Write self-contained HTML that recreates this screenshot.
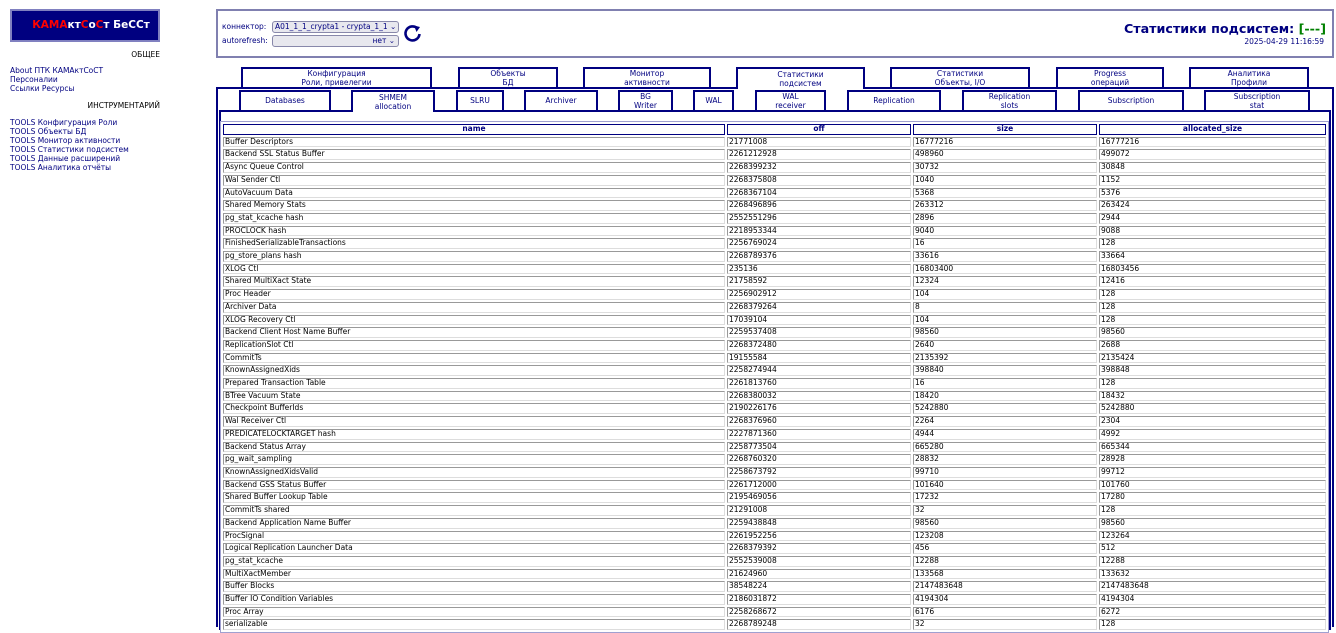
<!DOCTYPE html>
<html><head><meta charset="utf-8"><style>
*{box-sizing:border-box;margin:0;padding:0}
body{width:1336px;height:624px;overflow:hidden;background:#fff;font-family:"DejaVu Sans","Liberation Sans",sans-serif;font-size:7.5px;color:#000080;position:relative}
.a{position:absolute}
.logo{left:10px;top:9px;width:150px;height:33px;border:2px solid #8080c0;background:#000080;outline:1px solid #000080;outline-offset:-4px;color:#fff;font-weight:bold;font-size:10.5px;line-height:29px;text-align:center;padding-left:12px;white-space:nowrap}
.r{color:#ff0000}
.side{left:10px;line-height:9px;font-size:7.5px;white-space:nowrap}
.hdr{left:216px;top:9px;width:1118px;height:49px;border:2px solid #8080b0}
.sel{position:absolute;height:12px;border:1px solid #8888aa;border-radius:3px;background:#e8e8ee;font-size:7.5px;line-height:10px;padding-left:2px;color:#000080;white-space:nowrap;overflow:hidden}
.tab{position:absolute;border:2px solid #000080;border-bottom:none;background:#fff;text-align:center;font-size:7.5px;line-height:9.5px;display:flex;align-items:center;justify-content:center;color:#000080}
.frame{left:216px;top:87px;width:1118px;height:540px;border:2px solid #000080;border-bottom:none}
.panel{left:219px;top:110px;width:1112px;height:520px;border:2px solid #000080;border-bottom:none}
table{position:absolute;left:220px;top:121px;border:1px solid #a0a0d0;border-collapse:separate;border-spacing:2px;width:1109px;table-layout:fixed}
td,th{border:1px solid;border-color:#999 #ddd #ddd #999;height:10.7px;font-size:7.5px;line-height:8.7px;padding:0 1px;color:#000;font-weight:normal;text-align:left;white-space:nowrap;overflow:hidden}
th{color:#000080;font-weight:bold;text-align:center;border-color:#000080}
</style></head><body>
<div class="a logo"><span class="r">КАМА</span>кт<span class="r">С</span>о<span class="r">С</span>т БеССт</div>
<div class="a side" style="top:50px;width:150px;text-align:right;color:#000">ОБЩЕЕ</div>
<div class="a side" style="top:66px">About ПТК КАМАктСоСТ<br>Персоналии<br>Ссылки Ресурсы</div>
<div class="a side" style="top:101px;width:150px;text-align:right;color:#000">ИНСТРУМЕНТАРИЙ</div>
<div class="a side" style="top:118px">TOOLS Конфигурация Роли<br>TOOLS Объекты БД<br>TOOLS Монитор активности<br>TOOLS Статистики подсистем<br>TOOLS Данные расширений<br>TOOLS Аналитика отчёты</div>
<div class="a hdr"></div>
<div class="a" style="left:222px;top:22px;font-size:7.5px">коннектор:</div>
<div class="a" style="left:222px;top:36px;font-size:7.5px">autorefresh:</div>
<div class="sel" style="left:272px;top:21px;width:127px">A01_1_1_crypta1 - crypta_1_1 ⌄</div>
<div class="sel" style="left:272px;top:35px;width:127px;text-align:right;padding-right:3px">нет ⌄</div>
<svg class="a" style="left:403px;top:24px" width="20" height="20" viewBox="0 0 20 20"><path d="M14.5 4.5 A7 7 0 1 0 16.5 10" fill="none" stroke="#000080" stroke-width="2.6"/><path d="M11 1.5 L17 3 L13.5 8 Z" fill="#000080"/></svg>
<div class="a" style="right:10px;top:21px;font-size:12.7px;font-weight:bold;color:#000080">Статистики подсистем: <span style="color:#008000">[---]</span></div>
<div class="a" style="right:12px;top:37px;font-size:7.5px">2025-04-29 11:16:59</div>
<div class="a frame"></div>
<div class="tab" style="left:241px;top:67px;width:191px;height:20px">Конфигурация<br>Роли, привелегии</div>
<div class="tab" style="left:458px;top:67px;width:100px;height:20px">Объекты<br>БД</div>
<div class="tab" style="left:583px;top:67px;width:128px;height:20px">Монитор<br>активности</div>
<div class="tab" style="left:736px;top:67px;width:129px;height:22px;z-index:2">Статистики<br>подсистем</div>
<div class="tab" style="left:890px;top:67px;width:140px;height:20px">Статистики<br>Объекты, I/O</div>
<div class="tab" style="left:1056px;top:67px;width:108px;height:20px">Progress<br>операций</div>
<div class="tab" style="left:1189px;top:67px;width:120px;height:20px">Аналитика<br>Профили</div>
<div class="a panel"></div>
<div class="tab" style="left:239px;top:90px;width:92px;height:20px">Databases</div>
<div class="tab" style="left:351px;top:90px;width:84px;height:22px;z-index:2">SHMEM<br>allocation</div>
<div class="tab" style="left:456px;top:90px;width:48px;height:20px">SLRU</div>
<div class="tab" style="left:524px;top:90px;width:74px;height:20px">Archiver</div>
<div class="tab" style="left:618px;top:90px;width:55px;height:20px">BG<br>Writer</div>
<div class="tab" style="left:693px;top:90px;width:41px;height:20px">WAL</div>
<div class="tab" style="left:755px;top:90px;width:71px;height:20px">WAL<br>receiver</div>
<div class="tab" style="left:847px;top:90px;width:94px;height:20px">Replication</div>
<div class="tab" style="left:962px;top:90px;width:95px;height:20px">Replication<br>slots</div>
<div class="tab" style="left:1078px;top:90px;width:106px;height:20px">Subscription</div>
<div class="tab" style="left:1204px;top:90px;width:106px;height:20px">Subscription<br>stat</div>
<table>
<colgroup><col style="width:502px"><col style="width:184px"><col style="width:184px"><col></colgroup>
<tr><th>name</th><th>off</th><th>size</th><th>allocated_size</th></tr>
<tr><td>Buffer Descriptors</td><td>21771008</td><td>16777216</td><td>16777216</td></tr>
<tr><td>Backend SSL Status Buffer</td><td>2261212928</td><td>498960</td><td>499072</td></tr>
<tr><td>Async Queue Control</td><td>2268399232</td><td>30732</td><td>30848</td></tr>
<tr><td>Wal Sender Ctl</td><td>2268375808</td><td>1040</td><td>1152</td></tr>
<tr><td>AutoVacuum Data</td><td>2268367104</td><td>5368</td><td>5376</td></tr>
<tr><td>Shared Memory Stats</td><td>2268496896</td><td>263312</td><td>263424</td></tr>
<tr><td>pg_stat_kcache hash</td><td>2552551296</td><td>2896</td><td>2944</td></tr>
<tr><td>PROCLOCK hash</td><td>2218953344</td><td>9040</td><td>9088</td></tr>
<tr><td>FinishedSerializableTransactions</td><td>2256769024</td><td>16</td><td>128</td></tr>
<tr><td>pg_store_plans hash</td><td>2268789376</td><td>33616</td><td>33664</td></tr>
<tr><td>XLOG Ctl</td><td>235136</td><td>16803400</td><td>16803456</td></tr>
<tr><td>Shared MultiXact State</td><td>21758592</td><td>12324</td><td>12416</td></tr>
<tr><td>Proc Header</td><td>2256902912</td><td>104</td><td>128</td></tr>
<tr><td>Archiver Data</td><td>2268379264</td><td>8</td><td>128</td></tr>
<tr><td>XLOG Recovery Ctl</td><td>17039104</td><td>104</td><td>128</td></tr>
<tr><td>Backend Client Host Name Buffer</td><td>2259537408</td><td>98560</td><td>98560</td></tr>
<tr><td>ReplicationSlot Ctl</td><td>2268372480</td><td>2640</td><td>2688</td></tr>
<tr><td>CommitTs</td><td>19155584</td><td>2135392</td><td>2135424</td></tr>
<tr><td>KnownAssignedXids</td><td>2258274944</td><td>398840</td><td>398848</td></tr>
<tr><td>Prepared Transaction Table</td><td>2261813760</td><td>16</td><td>128</td></tr>
<tr><td>BTree Vacuum State</td><td>2268380032</td><td>18420</td><td>18432</td></tr>
<tr><td>Checkpoint BufferIds</td><td>2190226176</td><td>5242880</td><td>5242880</td></tr>
<tr><td>Wal Receiver Ctl</td><td>2268376960</td><td>2264</td><td>2304</td></tr>
<tr><td>PREDICATELOCKTARGET hash</td><td>2227871360</td><td>4944</td><td>4992</td></tr>
<tr><td>Backend Status Array</td><td>2258773504</td><td>665280</td><td>665344</td></tr>
<tr><td>pg_wait_sampling</td><td>2268760320</td><td>28832</td><td>28928</td></tr>
<tr><td>KnownAssignedXidsValid</td><td>2258673792</td><td>99710</td><td>99712</td></tr>
<tr><td>Backend GSS Status Buffer</td><td>2261712000</td><td>101640</td><td>101760</td></tr>
<tr><td>Shared Buffer Lookup Table</td><td>2195469056</td><td>17232</td><td>17280</td></tr>
<tr><td>CommitTs shared</td><td>21291008</td><td>32</td><td>128</td></tr>
<tr><td>Backend Application Name Buffer</td><td>2259438848</td><td>98560</td><td>98560</td></tr>
<tr><td>ProcSignal</td><td>2261952256</td><td>123208</td><td>123264</td></tr>
<tr><td>Logical Replication Launcher Data</td><td>2268379392</td><td>456</td><td>512</td></tr>
<tr><td>pg_stat_kcache</td><td>2552539008</td><td>12288</td><td>12288</td></tr>
<tr><td>MultiXactMember</td><td>21624960</td><td>133568</td><td>133632</td></tr>
<tr><td>Buffer Blocks</td><td>38548224</td><td>2147483648</td><td>2147483648</td></tr>
<tr><td>Buffer IO Condition Variables</td><td>2186031872</td><td>4194304</td><td>4194304</td></tr>
<tr><td>Proc Array</td><td>2258268672</td><td>6176</td><td>6272</td></tr>
<tr><td>serializable</td><td>2268789248</td><td>32</td><td>128</td></tr>
</table>
</body></html>
